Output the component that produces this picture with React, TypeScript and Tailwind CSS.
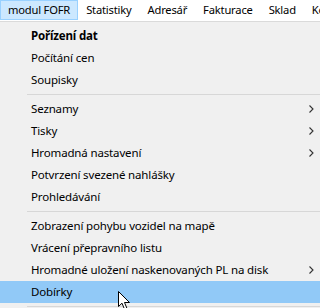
import React from "react";

type Item = { label: string; bold?: boolean; sub?: boolean; active?: boolean } | "sep";

const items: Item[] = [
  { label: "Pořízení dat", bold: true },
  { label: "Počítání cen" },
  { label: "Soupisky" },
  "sep",
  { label: "Seznamy", sub: true },
  { label: "Tisky", sub: true },
  { label: "Hromadná nastavení", sub: true },
  { label: "Potvrzení svezené nahlášky" },
  { label: "Prohledávání" },
  "sep",
  { label: "Zobrazení pohybu vozidel na mapě" },
  { label: "Vrácení přepravního listu" },
  { label: "Hromadné uložení naskenovaných PL na disk", sub: true },
  { label: "Dobírky", active: true },
  "sep",
];

const bar = ["modul FOFR", "Statistiky", "Adresář", "Fakturace", "Sklad", "Ko"];

function Chevron() {
  return (
    <svg width="5" height="8" viewBox="0 0 5 8" className="shrink-0">
      <path d="M0.5 0.5 L4 4 L0.5 7.5" fill="none" stroke="#333" strokeWidth="1.1" />
    </svg>
  );
}

function Cursor() {
  return (
    <svg
      width="13"
      height="20"
      viewBox="0 0 13 20"
      className="absolute left-[118px] top-[291px]"
    >
      <path
        d="M0.5 0.5 L0.5 15.5 L4 12.2 L6.6 18.5 L9 17.5 L6.5 11.5 L11.5 11.5 Z"
        fill="#fff"
        stroke="#000"
        strokeWidth="1"
      />
    </svg>
  );
}

export default function App() {
  return (
    <div
      className="relative w-[320px] h-[308px] overflow-hidden bg-[#f0f0f0] text-[11.5px] tracking-[-0.15px] text-black"
      style={{ fontFamily: '"Segoe UI", "Noto Sans", sans-serif' }}
    >
      <div className="flex h-[22px] bg-white border-b border-[#dadada] whitespace-nowrap text-[11.2px] tracking-[-0.2px]">
        {bar.map((b, i) => (
          <div
            key={b}
            className={
              i === 0
                ? "h-[20px] px-[7px] flex items-center bg-[#cce8ff] border border-[#99d1ff]"
                : "h-[20px] px-[7px] flex items-center border border-transparent"
            }
          >
            {b}
          </div>
        ))}
      </div>
      <div className="pt-[3px]">
        {items.map((it, i) =>
          it === "sep" ? (
            <div key={i} className="h-[7px] flex items-center pl-[27px]">
              <div className="h-px w-full bg-[#d7d7d7]" />
            </div>
          ) : (
            <div
              key={i}
              className={
                "h-[22px] flex items-center pl-[31px] pr-[6px] whitespace-nowrap " +
                (it.active ? "bg-[#91c9f7]" : "")
              }
            >
              <span className={"flex-1 " + (it.bold ? "font-bold" : "")}>{it.label}</span>
              {it.sub && <Chevron />}
            </div>
          )
        )}
      </div>
      <Cursor />
    </div>
  );
}
